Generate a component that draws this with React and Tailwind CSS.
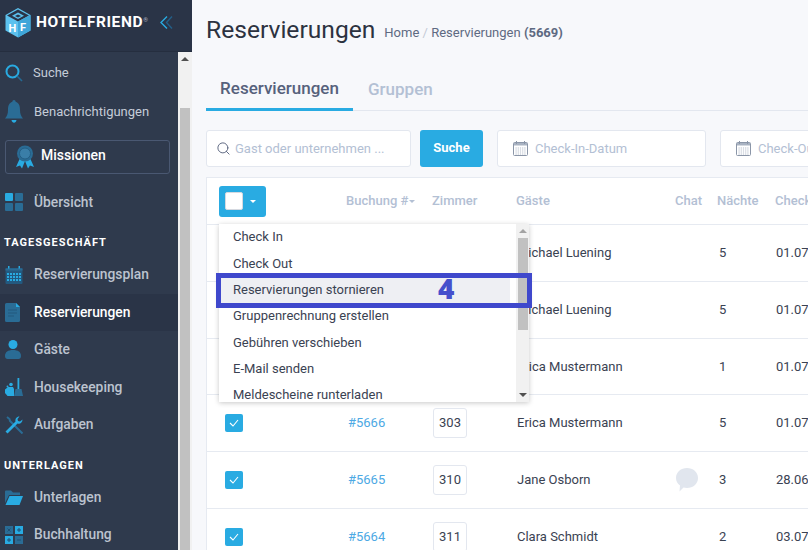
import { Search } from 'lucide-react'

const font = { fontFamily: 'Roboto, sans-serif' }

function Logo() {
  return (
    <svg width="26" height="30" viewBox="0 0 26 30" className="shrink-0">
      <path d="M13 0 L25.5 7 V22.5 L13 29.5 L0.5 22.5 V7 Z" fill="#5cc1ee" />
      <path d="M13 1.5 L24 7.5 L13 13.5 L2 7.5 Z" fill="#2a3447" />
      <path d="M13 4.5 L19 7.8 L13 11 L7 7.8 Z" fill="#5cc1ee" />
      <path d="M13 6.4 L16 8 L13 9.5 L10 8 Z" fill="#2a3447" />
      <path d="M13 13.5 L25.5 7 V22.5 L13 29.5 Z" fill="#3fa6d9" />
      <text x="3.5" y="24" fontSize="11" fontWeight="700" fill="#fff" fontFamily="Roboto, sans-serif">H</text>
      <text x="15" y="23" fontSize="11" fontWeight="700" fill="#fff" fontFamily="Roboto, sans-serif">F</text>
    </svg>
  )
}

function CollapseIcon() {
  return (
    <svg width="13" height="13" viewBox="0 0 13 13" fill="none" className="ml-[12px]">
      <path d="M12 .5L6.500 6.500L12 12.500" stroke="#235f88" strokeWidth="1.400" />
      <path d="M7 .5L1 6.500L7 12.500" stroke="#29abe2" strokeWidth="1.400" />
    </svg>
  )
}

function SearchIcon() {
  return (
    <svg width="18" height="18" viewBox="0 0 18 18" fill="none">
      <circle cx="7.5" cy="7.5" r="6" stroke="#29abe2" strokeWidth="2" />
      <path d="M12 12 L17 17" stroke="#246a94" strokeWidth="1.6" />
    </svg>
  )
}

function BellIcon() {
  return (
    <svg width="18" height="24" viewBox="0 0 18 24">
      <path d="M9 0c1 0 1.600.7 1.600 1.800C14 2.800 15 6 15 10c0 4 1 6 3 8.500H0C2 16 3 14 3 10c0-4 1-7.200 4.400-8.200C7.400.7 8 0 9 0z" fill="#2a6c95" />
      <path d="M6.500 20h5c-.3 1.800-1.300 2.700-2.500 2.700S6.800 21.800 6.500 20z" fill="#29abe2" />
    </svg>
  )
}

function MedalIcon() {
  return (
    <svg width="20" height="24" viewBox="0 0 20 24">
      <path d="M5 13 L1 22 L5 20.500 L7 23.500 L10 16 L13 23.500 L15 20.500 L19 22 L15 13 Z" fill="#29abe2" />
      <circle cx="10" cy="8.500" r="8" fill="#2a6c95" />
      <circle cx="10" cy="8.500" r="5.500" fill="#3a7ea8" stroke="#245e84" strokeWidth="1" />
    </svg>
  )
}

function GridIcon() {
  return (
    <svg width="18" height="18" viewBox="0 0 18 18">
      <rect x="0" y="0" width="8" height="8" rx="1" fill="#29abe2" />
      <rect x="10" y="0" width="8" height="8" rx="1" fill="#2a6c95" />
      <rect x="0" y="10" width="8" height="8" rx="1" fill="#2a6c95" />
      <rect x="10" y="10" width="8" height="8" rx="1" fill="#2a6c95" />
    </svg>
  )
}

function PlanIcon() {
  return (
    <svg width="18" height="18" viewBox="0 0 18 18">
      <rect x="0.500" y="2" width="17" height="16" rx="1" fill="#23597f" />
      <rect x="3" y="0" width="1.500" height="4" fill="#29abe2" />
      <rect x="13.500" y="0" width="1.500" height="4" fill="#29abe2" />
      <rect x="0.500" y="2.500" width="17" height="2" fill="#2a6c95" />
      {[7, 10, 13].map(y =>
        [2, 5, 8, 11, 14].map(x => <rect key={`${x}-${y}`} x={x} y={y} width="2" height="2" fill="#29abe2" />)
      )}
    </svg>
  )
}

function DocIcon() {
  return (
    <svg width="16" height="19" viewBox="0 0 16 19">
      <path d="M1.500 0H11L15 4V17.500A1.500 1.500 0 0 1 13.500 19H1.500A1.500 1.500 0 0 1 0 17.500V1.500A1.500 1.500 0 0 1 1.500 0z" fill="#2a6c95" />
      <path d="M11 0L15 4H11z" fill="#29abe2" />
      <path d="M3 7h9M3 10h9M3 13h6" stroke="#23597f" strokeWidth="1.200" />
    </svg>
  )
}

function UserIcon() {
  return (
    <svg width="16" height="19" viewBox="0 0 16 19">
      <circle cx="8" cy="4.500" r="4.500" fill="#29abe2" />
      <path d="M0 16c0-4 3-6 8-6s8 2 8 6c0 2-1 3-2.500 3h-11C1 19 0 18 0 16z" fill="#2a6c95" />
    </svg>
  )
}

function BroomIcon() {
  return (
    <svg width="18" height="18" viewBox="0 0 18 18">
      <rect x="12.500" y="0" width="1.800" height="11" fill="#29abe2" />
      <path d="M10.500 11H16.500L18 18H9z" fill="#2a6c95" />
      <path d="M0 11.500L3 9H8L9 11V18H2.500L0 15z" fill="#29abe2" />
      <circle cx="6" cy="6.500" r="1.800" fill="#29abe2" />
      <circle cx="2.500" cy="8.500" r="1" fill="#29abe2" />
    </svg>
  )
}

function ToolsIcon() {
  return (
    <svg width="18" height="18" viewBox="0 0 18 18">
      <path d="M2 1L4.500 3L5 5L15.500 15.500L17.500 17.500" stroke="#2a6c95" strokeWidth="2" fill="none" />
      <path d="M0.500 15.500L10.500 5.500C10 3 11.500.5 14.500.5L12.500 3L13 5L15 5.500L17.500 3.500C17.500 6.500 15 8.500 12.500 7.500L2.500 17.500z" fill="#29abe2" />
    </svg>
  )
}

function FolderIcon() {
  return (
    <svg width="18" height="15" viewBox="0 0 18 15">
      <path d="M0 1.500A1 1 0 0 1 1 .5H6L8 2.500H15V5H4L0 13z" fill="#2a6c95" />
      <path d="M4.500 6H18L14.500 15H0.500z" fill="#29abe2" />
    </svg>
  )
}

function CalcIcon() {
  return (
    <svg width="18" height="18" viewBox="0 0 18 18">
      <rect x="0" y="0" width="8" height="8" fill="#2a6c95" />
      <rect x="10" y="0" width="8" height="8" fill="#29abe2" />
      <rect x="0" y="10" width="8" height="8" fill="#29abe2" />
      <rect x="10" y="10" width="8" height="8" fill="#2a6c95" />
      <path d="M2.500 2.500l3 3m0-3l-3 3M14 2v4M12 4h4M2 14h4M4 12v4M12 14h4" stroke="#1f4f72" strokeWidth="1" />
    </svg>
  )
}

function CalendarIcon() {
  return (
    <svg width="15" height="15" viewBox="0 0 15 15" className="shrink-0" fill="none">
      <rect x="0.500" y="1.500" width="14" height="13" rx="1" stroke="#8b96a8" />
      <rect x="1" y="2" width="13" height="2.500" fill="#a9b3c2" />
      <path d="M3.500 0v3M11.500 0v3" stroke="#8b96a8" />
      <path d="M2.500 7h10M2.500 9h10M2.500 11h10M2.500 13h10" stroke="#b5bdca" strokeDasharray="1.200 1" />
    </svg>
  )
}

function NavItem({ icon, label, active }) {
  return (
    <div className={`flex h-[37.5px] items-center ${active ? 'bg-[#2a3447]' : ''}`}>
      <div className="flex w-[34px] shrink-0 justify-start pl-[5px]">{icon}</div>
      <span className={`text-[13.8px] font-medium ${active ? 'text-white' : 'text-[#bcc3cf]'}`}>{label}</span>
    </div>
  )
}

function SectionLabel({ children }) {
  return (
    <div className="flex h-[35px] items-end pb-[6px] pl-1 text-[11px] leading-[14px] font-bold tracking-[1px] text-white">
      {children}
    </div>
  )
}

function Sidebar() {
  return (
    <aside className="flex h-full w-[192px] shrink-0 flex-col">
      <div className="flex h-[52px] shrink-0 items-center border-b border-[#252e3f] bg-[#2a3447] pb-[6px] pl-[5px]">
        <Logo />
        <span className="ml-[5px] text-[15.5px] font-bold tracking-[0.6px] text-white">HOTELFRIEND</span>
        <span className="mb-[6px] text-[6px] text-[#aab2c0]">®</span>
        <CollapseIcon />
      </div>
      <div className="flex min-h-0 flex-1">
        <nav className="w-[178px] shrink-0 overflow-hidden bg-[#2f3a4d]">
          <div className="flex h-[40px] items-center pt-[1px] pl-[5px]">
            <div className="w-[28px]"><SearchIcon /></div>
            <span className="text-[13px] text-[#c5ccd8]">Suche</span>
          </div>
          <div className="flex h-[39px] items-center pl-[5px]">
            <div className="w-[29px]"><BellIcon /></div>
            <span className="text-[13px] text-[#c5ccd8]">Benachrichtigungen</span>
          </div>
          <div className="mx-[5px] mt-[9px] mb-[9.500px] flex h-[34px] w-[165px] items-center rounded-[3px] border border-[#4a5872] pl-[9px]">
            <MedalIcon />
            <span className="mb-[3px] ml-[6px] text-[14px] font-medium text-white">Missionen</span>
          </div>
          <NavItem icon={<GridIcon />} label="Übersicht" />
          <SectionLabel>TAGESGESCHÄFT</SectionLabel>
          <NavItem icon={<PlanIcon />} label="Reservierungsplan" />
          <NavItem icon={<DocIcon />} label="Reservierungen" active />
          <NavItem icon={<UserIcon />} label="Gäste" />
          <NavItem icon={<BroomIcon />} label="Housekeeping" />
          <NavItem icon={<ToolsIcon />} label="Aufgaben" />
          <SectionLabel>UNTERLAGEN</SectionLabel>
          <NavItem icon={<FolderIcon />} label="Unterlagen" />
          <NavItem icon={<CalcIcon />} label="Buchhaltung" />
        </nav>
        <div className="flex w-[14px] shrink-0 flex-col items-center bg-[#f1f1f1]">
          <div className="mt-[5px] h-0 w-0 border-x-[4px] border-b-[4px] border-x-transparent border-b-[#505050]" />
          <div className="mt-[47px] h-full w-[10px] bg-[#c1c1c1]" />
        </div>
      </div>
    </aside>
  )
}

function Check() {
  return (
    <div className="flex size-[18px] items-center justify-center rounded-[2px] bg-[#29abe2]">
      <svg width="10" height="8" viewBox="0 0 10 8" fill="none">
        <path d="M1 4l3 3 5-6" stroke="#fff" strokeWidth="1.100" />
      </svg>
    </div>
  )
}

function ChatBubble() {
  return (
    <svg width="22" height="25" viewBox="0 0 22 25" className="ml-[1px]">
      <path d="M11 1c6 0 11 4 11 10s-5 10-11 10c-1.500 0-2.500-.2-3.500-.5L3.500 24.500L4 18.500C1.500 16.500 0 14 0 11C0 5 5 1 11 1z" fill="#e1e6ee" />
    </svg>
  )
}

const rows = [
  { id: '#5669', room: '301', guest: 'Michael Luening', nights: '5', date: '01.07.2021' },
  { id: '#5668', room: '302', guest: 'Michael Luening', nights: '5', date: '01.07.2021' },
  { id: '#5667', room: '304', guest: 'Erica Mustermann', nights: '1', date: '01.07.2021' },
  { id: '#5666', room: '303', guest: 'Erica Mustermann', nights: '5', date: '01.07.2021' },
  { id: '#5665', room: '310', guest: 'Jane Osborn', nights: '3', date: '28.06.2021', chat: true },
  { id: '#5664', room: '311', guest: 'Clara Schmidt', nights: '2', date: '03.07.2021' },
]

const gridCols = 'grid-cols-[141px_85px_84px_158px_42px_58px_120px]'

function Row({ row }) {
  return (
    <div className={`grid h-[56.75px] ${gridCols} items-center border-b border-[#e6eaf1] text-[13px] text-[#3a4252]`}>
      <div className="pl-[18px]"><Check /></div>
      <div className="text-[#4da9e4]">{row.id}</div>
      <div>
        <div className="flex h-[30px] w-[34px] items-center justify-center rounded-[3px] border border-[#e3e7ef]">{row.room}</div>
      </div>
      <div>{row.guest}</div>
      <div>{row.chat && <ChatBubble />}</div>
      <div className="pl-[2px]">{row.nights}</div>
      <div className="pl-[1px]">{row.date}</div>
    </div>
  )
}

const menuItems = [
  'Check In',
  'Check Out',
  'Reservierungen stornieren',
  'Gruppenrechnung erstellen',
  'Gebühren verschieben',
  'E-Mail senden',
  'Meldescheine runterladen',
]

function Dropdown() {
  return (
    <div className="absolute top-[46px] left-[12px] z-10 flex h-[178px] w-[310px] justify-between overflow-hidden bg-white shadow-[0_1px_5px_rgba(0,0,0,0.22)]">
      <div className="w-[291px] shrink-0">
        {menuItems.map((item, i) => (
          <div
            key={item}
            className={`flex h-[26.3px] items-center pl-[14px] text-[13px] text-[#3a4252] ${i === 2 ? 'bg-[#eeeff3]' : ''}`}
          >
            {item}
          </div>
        ))}
      </div>
      <div className="flex h-full w-[13px] flex-col items-center bg-[#f1f1f1]">
        <div className="mt-[5px] h-0 w-0 border-x-[4px] border-b-[4px] border-x-transparent border-b-[#a3a3a3]" />
        <div className="mt-[5px] h-[92px] w-[10px] bg-[#c1c1c1]" />
        <div className="mt-auto mb-[5px] h-0 w-0 border-x-[4px] border-t-[4px] border-x-transparent border-t-[#505050]" />
      </div>
    </div>
  )
}

function Table() {
  return (
    <div className="relative mt-[10px] w-[700px] shrink-0 border-t border-l border-[#e6eaf1] bg-white">
      <div className={`grid h-[47px] ${gridCols} items-center border-b border-[#e6eaf1] text-[13px] font-medium text-[#b3c0d4]`}>
        <div className="pl-[12px]">
          <div className="flex h-[31px] w-[47px] items-center rounded-[3px] bg-[#29abe2] pl-[6px]">
            <div className="size-[18px] rounded-[2px] border border-[#d5d9e0] bg-white" />
            <div className="ml-[7px] h-0 w-0 border-x-[3px] border-t-[3px] border-x-transparent border-t-white" />
          </div>
        </div>
        <div className="-ml-[2px] flex items-center">
          Buchung #
          <div className="ml-[1px] h-0 w-0 border-x-[3px] border-t-[3px] border-x-transparent border-t-[#b3c0d4]" />
        </div>
        <div className="-ml-[1px]">Zimmer</div>
        <div className="-ml-[1px]">Gäste</div>
        <div>Chat</div>
        <div>Nächte</div>
        <div className="whitespace-nowrap">Check-In</div>
      </div>
      {rows.map(row => <Row key={row.id} row={row} />)}
      <Dropdown />
      <div className="absolute top-[95px] left-[9px] z-20 h-[35px] w-[316px] border-[5px] border-[#3f48cc]">
        <span className="absolute top-1/2 left-[217px] -translate-y-[62%] text-[28px] leading-none font-extrabold text-[#4650cc]" style={{ fontFamily: '"Open Sans", sans-serif' }}>4</span>
      </div>
    </div>
  )
}

function DateField({ label, className }) {
  return (
    <div className={`flex h-[37px] w-[209px] shrink-0 items-center rounded-[3px] border border-[#e3e7ef] bg-white pl-[15px] text-[13px] text-[#b3c0d4] ${className}`}>
      <CalendarIcon />
      <span className="ml-[7px]">{label}</span>
    </div>
  )
}

export default function App() {
  return (
    <div className="flex h-[550px] w-[808px] overflow-hidden bg-[#f7f8fb]" style={font}>
      <Sidebar />
      <main className="min-w-0 flex-1 overflow-hidden pl-[14px]">
        <div className="flex h-[60px] w-[700px] items-center">
          <h1 className="text-[24.6px] leading-none text-[#2c3240]">Reservierungen</h1>
          <div className="mt-[6px] ml-[9px] text-[13px] text-[#5e6a82]">
            Home <span className="text-[#c3cad6]">/</span> Reservierungen <span className="font-bold">(5669)</span>
          </div>
        </div>
        <div className="flex h-[51px] w-[700px] border-b border-[#e3e7ef]">
          <div className="flex h-[51px] w-[147px] items-center justify-center border-b-[3px] border-[#29abe2] pt-[9px] text-[17px] font-medium text-[#56617c]">
            Reservierungen
          </div>
          <div className="flex items-center pt-[9px] pl-[15px] text-[17px] font-medium text-[#b3c0d4]">Gruppen</div>
        </div>
        <div className="mt-[19px] flex h-[37px] w-[700px] items-center">
          <div className="flex h-[37px] w-[205px] shrink-0 items-center rounded-[3px] border border-[#e3e7ef] bg-white pl-[9px] text-[13px] text-[#b3c0d4]">
            <Search size={15} strokeWidth={1.5} className="text-[#56617c]" />
            <span className="ml-[4px]">Gast oder unternehmen ...</span>
          </div>
          <button className="ml-[9px] h-[37px] w-[63px] shrink-0 rounded-[3px] bg-[#29abe2] pb-[2px] text-[13px] font-bold text-white">Suche</button>
          <DateField label="Check-In-Datum" className="ml-[14px]" />
          <DateField label="Check-Out-Datum" className="ml-[14px]" />
        </div>
        <Table />
      </main>
    </div>
  )
}
